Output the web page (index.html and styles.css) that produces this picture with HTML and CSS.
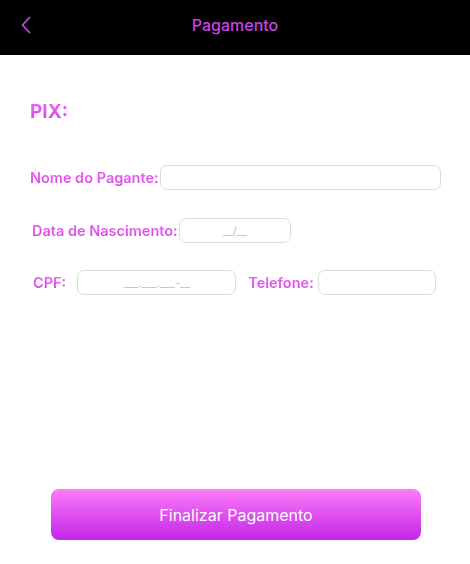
FILE: index.html
```html
<!DOCTYPE html>
<html lang="pt">
<head>
<meta charset="utf-8">
<link rel="stylesheet" href="styles.css">
</head>
<body>
<div class="page">
  <header class="topbar">
    <button class="back" aria-label="Voltar">
      <svg width="12" height="18" viewBox="0 0 12 18"><path d="M9.5 1.5 L2.5 9 L9.5 16.5" fill="none" stroke="#c845e2" stroke-width="1.8" stroke-linecap="round" stroke-linejoin="round"/></svg>
    </button>
    <h1 class="title">Pagamento</h1>
  </header>
  <main class="content">
    <h2 class="section">PIX:</h2>
    <div class="row row-name">
      <label class="label">Nome do Pagante:</label>
      <input class="field field-name" type="text">
    </div>
    <div class="row row-date">
      <label class="label">Data de Nascimento:</label>
      <input class="field field-date" type="text" placeholder="__/__">
    </div>
    <div class="row row-doc">
      <label class="label">CPF:</label>
      <input class="field field-cpf" type="text" placeholder="___.___.___-__">
      <label class="label label-tel">Telefone:</label>
      <input class="field field-tel" type="text">
    </div>
  </main>
  <div class="actions">
    <button class="submit">Finalizar Pagamento</button>
  </div>
</div>
</body>
</html>
```
FILE: styles.css
```css
* { box-sizing: border-box; }
html, body { margin: 0; padding: 0; background: #fff; }
body { font-family: Inter, "Noto Sans", sans-serif; }
.page { width: 470px; height: 564px; display: flex; flex-direction: column; }
.topbar {
  height: 55px; background: #000; display: flex; align-items: center;
  justify-content: center; position: relative; flex-shrink: 0;
}
.back {
  position: absolute; left: 18px; top: 15px; width: 16px; height: 20px;
  background: none; border: 0; padding: 0 0 0 2px; display: flex; align-items: center;
}
.title {
  margin: 0; font-size: 16px; font-weight: 500; color: #c845e2; margin-top: -6px;
}
.content { padding: 45px 0 0 30px; flex: 1; }
.section, .label {
  background: linear-gradient(180deg, #f466f6 0%, #d43fe6 100%);
  -webkit-background-clip: text; background-clip: text; color: transparent;
}
.section { margin: 0; font-size: 19px; font-weight: 700; line-height: 24px; display: inline-block; }
.row { display: flex; align-items: center; }
.label { font-size: 14.5px; font-weight: 600; line-height: 18px; white-space: nowrap; }
.field {
  height: 25px; border: 1px solid #dcdcdc; border-radius: 7px; background: #fff;
  font-family: inherit; font-size: 11px; color: #333; text-align: center; padding: 0 6px;
  outline: none; flex-shrink: 0;
}
.field::placeholder { color: #c4c4c4; }
.row-name { margin-top: 41px; }
.field-name { width: 281px; margin-left: 1px; }
.row-date { margin-top: 28px; padding-left: 2px; }
.field-date { width: 112px; margin-left: 1px; }
.row-doc { margin-top: 27px; padding-left: 3px; }
.field-cpf { width: 159px; margin-left: 11px; }
.label-tel { margin-left: 12px; }
.field-tel { width: 118px; margin-left: 4px; }
.actions { padding: 0 49px 24px 51px; }
.submit {
  width: 370px; height: 51px; border: 0; border-radius: 8px;
  background: linear-gradient(180deg, #fb7ef9 0%, #e050ef 50%, #c226ea 100%);
  color: #fff; font-family: inherit; font-size: 16px; font-weight: 400;
}
```
